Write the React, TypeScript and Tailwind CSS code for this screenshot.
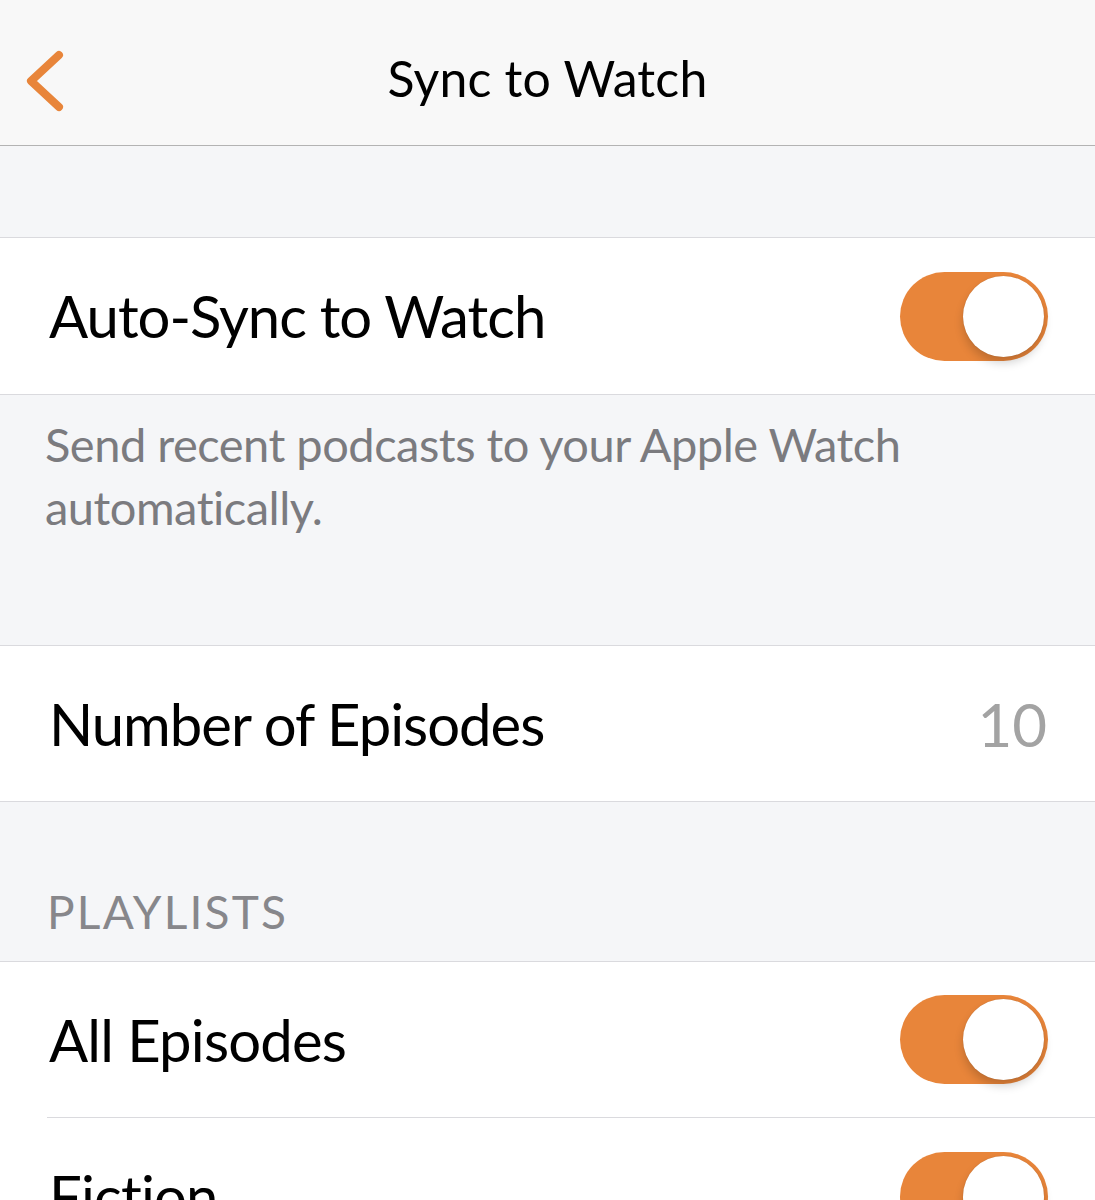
import React from "react";

function Toggle() {
  return (
    <div className="relative h-[89px] w-[148px] rounded-full bg-[#e8853a]">
      <div className="absolute right-[4px] top-[4px] h-[81px] w-[81px] rounded-full bg-white shadow-[0_6px_10px_rgba(0,0,0,0.18),0_0_1px_rgba(0,0,0,0.2)]" />
    </div>
  );
}

export default function App() {
  return (
    <div
      className="flex h-[1200px] w-[1095px] flex-col overflow-hidden bg-[#f5f6f8] text-black"
      style={{ fontFamily: "Lato, 'Noto Sans', sans-serif" }}
    >
      {/* Header */}
      <div className="relative flex h-[146px] shrink-0 items-center justify-center border-b border-[#b3b3b3] bg-[#f8f8f8]">
        <svg
          className="absolute left-[23px] top-[47px]"
          width="44"
          height="68"
          viewBox="0 0 44 68"
          fill="none"
        >
          <path
            d="M36 8 L8 34 L36 60"
            stroke="#e8853a"
            strokeWidth="8"
            strokeLinecap="round"
            strokeLinejoin="round"
          />
        </svg>
        <span className="pt-[10px] text-[50px] leading-none tracking-[0.2px]">Sync to Watch</span>
      </div>

      {/* spacer */}
      <div className="h-[92px] shrink-0 border-b border-[#dadade]" />

      {/* Auto-sync row */}
      <div className="flex h-[157px] shrink-0 items-center justify-between border-b border-[#dadade] bg-white pl-[49px] pr-[47px]">
        <span className="text-[58px] leading-none tracking-[-1px]">Auto-Sync to Watch</span>
        <Toggle />
      </div>

      {/* footer text */}
      <div className="h-[251px] shrink-0 border-b border-[#dadade] pl-[45px] pr-[40px] pt-[18px]">
        <p className="text-[47px] leading-[63px] tracking-[-0.5px] text-[#7b7b7f]">
          Send recent podcasts to your Apple Watch automatically.
        </p>
      </div>

      {/* Number of episodes */}
      <div className="flex h-[156px] shrink-0 items-center justify-between border-b border-[#dadade] bg-white pl-[49px] pr-[48px]">
        <span className="text-[58px] leading-none tracking-[-1px]">Number of Episodes</span>
        <span className="text-[60px] leading-none text-[#a3a3a3]">10</span>
      </div>

      {/* Playlists header */}
      <div className="flex h-[160px] shrink-0 items-end border-b border-[#dadade] pb-[26px] pl-[47px]">
        <span className="text-[46px] leading-none tracking-[2.2px] text-[#87878b]">PLAYLISTS</span>
      </div>

      {/* All Episodes */}
      <div className="shrink-0 bg-white pl-[47px]">
        <div className="flex h-[156px] items-center justify-between border-b border-[#dadade] pl-[2px] pr-[47px]">
          <span className="text-[58px] leading-none tracking-[-0.8px]">All Episodes</span>
          <Toggle />
        </div>
        <div className="flex h-[156px] items-center justify-between pl-[2px] pr-[47px]">
          <span className="text-[58px] leading-none tracking-[-0.8px]">Fiction</span>
          <Toggle />
        </div>
      </div>
      <div className="flex-1 bg-white" />
    </div>
  );
}
